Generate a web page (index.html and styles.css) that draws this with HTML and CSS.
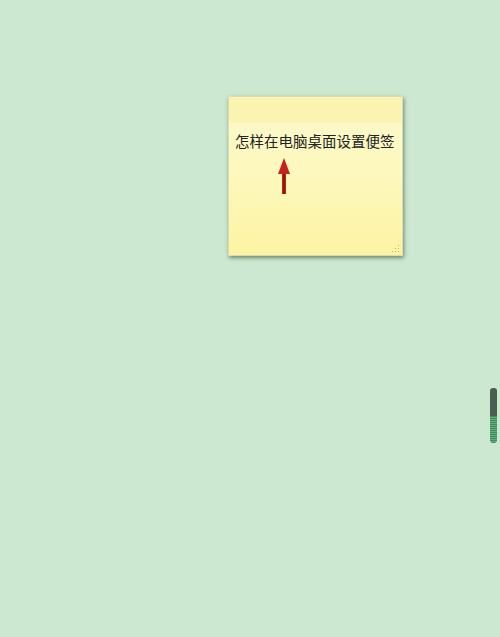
FILE: index.html
```html
<!DOCTYPE html>
<html>
<head>
<meta charset="utf-8">
<link rel="stylesheet" href="styles.css">
</head>
<body>
<div class="desktop">
  <div class="note">
    <div class="note-bar"></div>
    <div class="note-body">
      <div class="note-text">怎样在电脑桌面设置便签</div>
      <svg class="arrow" width="16" height="38" viewBox="0 0 16 38">
        <path d="M8 1 L14 17 L10 17 L10 37 L6 37 L6 17 L2 17 Z" fill="#c8201e"/>
        <rect x="7" y="17" width="2" height="20" fill="#8a1a14"/>
      </svg>
      <div class="grip">
        <svg width="8" height="8" viewBox="0 0 8 8"><g fill="#b8b28a"><rect x="6" y="0" width="1" height="1"/><rect x="3" y="3" width="1" height="1"/><rect x="6" y="3" width="1" height="1"/><rect x="0" y="6" width="1" height="1"/><rect x="3" y="6" width="1" height="1"/><rect x="6" y="6" width="1" height="1"/></g></svg>
      </div>
    </div>
  </div>
  <div class="scroll">
    <div class="scroll-top"></div>
    <div class="scroll-bottom"></div>
  </div>
</div>
</body>
</html>
```
FILE: styles.css
```css
html, body {
  margin: 0;
  padding: 0;
}
body {
  background: #cde8d1;
  width: 500px;
  height: 637px;
  overflow: hidden;
  font-family: "Noto Sans CJK SC", "Liberation Sans", sans-serif;
}
.desktop {
  position: relative;
  width: 500px;
  height: 637px;
}
.note {
  position: absolute;
  left: 228px;
  top: 96px;
  width: 175px;
  height: 160px;
  display: flex;
  flex-direction: column;
  box-shadow: 1px 2px 4px rgba(50, 70, 50, 0.6);
  border: 1px solid #d9dcae;
  box-sizing: border-box;
}
.note-bar {
  height: 26px;
  background: #fbf3b0;
}
.note-body {
  position: relative;
  flex: 1;
  background: linear-gradient(#fcf9c8, #fdf7b6 55%, #fdf3a2);
}
.note-text {
  margin-top: 8px;
  padding-left: 6px;
  font-size: 14.5px;
  line-height: 20px;
  color: #222;
  white-space: nowrap;
}
.arrow {
  position: absolute;
  left: 47px;
  top: 34px;
}
.grip {
  position: absolute;
  right: 2px;
  bottom: 2px;
  line-height: 0;
}
.scroll {
  position: absolute;
  left: 490px;
  top: 388px;
  width: 7px;
  height: 55px;
  border-radius: 3px;
  overflow: hidden;
  display: flex;
  flex-direction: column;
}
.scroll-top {
  height: 28px;
  background: #4a5e52;
}
.scroll-bottom {
  flex: 1;
  background: repeating-linear-gradient(#3f8a5a 0 1px, #62b07e 1px 2px);
}
```
